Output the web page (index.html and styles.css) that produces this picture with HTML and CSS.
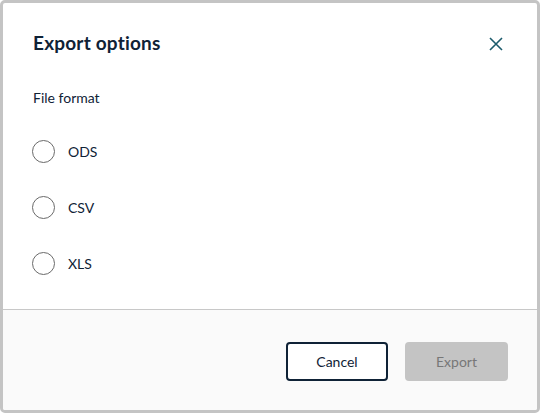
FILE: index.html
```html
<!DOCTYPE html>
<html>
<head>
<meta charset="utf-8">
<link rel="stylesheet" href="styles.css">
</head>
<body>
<div class="modal">
  <div class="header">
    <h1 class="title">Export options</h1>
    <button class="close" aria-label="Close">
      <svg width="14" height="14" viewBox="0 0 14 14"><path d="M1 1 L13 13 M13 1 L1 13" stroke="#1b5b6c" stroke-width="1.6" fill="none"/></svg>
    </button>
  </div>
  <div class="body">
    <div class="label">File format</div>
    <div class="options">
      <label class="option"><span class="radio"></span><span class="opt-text">ODS</span></label>
      <label class="option"><span class="radio"></span><span class="opt-text">CSV</span></label>
      <label class="option"><span class="radio"></span><span class="opt-text">XLS</span></label>
    </div>
  </div>
  <div class="footer">
    <button class="btn btn-cancel">Cancel</button>
    <button class="btn btn-export" disabled>Export</button>
  </div>
</div>
</body>
</html>
```
FILE: styles.css
```css
html, body {
  margin: 0;
  padding: 0;
  background: #ffffff;
}
body {
  font-family: Lato, "Open Sans", sans-serif;
  color: #0f2236;
}
.modal {
  box-sizing: border-box;
  width: 540px;
  height: 413px;
  border: 3px solid #c4c4c4;
  border-radius: 5px;
  overflow: hidden;
  display: flex;
  flex-direction: column;
  background: #ffffff;
}
.header {
  display: flex;
  justify-content: space-between;
  align-items: center;
  padding: 28px 34px 0 30px;
  height: 24px;
}
.title {
  margin: 0;
  font-size: 19px;
  line-height: 24px;
  font-weight: 700;
  letter-spacing: 0.2px;
  color: #0f2236;
}
.close {
  border: 0;
  background: none;
  padding: 0;
  width: 14px;
  height: 14px;
  display: flex;
  margin-top: 1px;
}
.body {
  flex: 1;
  padding: 33px 30px 0 30px;
}
.label {
  font-size: 14px;
  line-height: 20px;
  color: #0f2236;
}
.options {
  display: flex;
  flex-direction: column;
  gap: 33px;
  margin-top: 32px;
}
.option {
  display: flex;
  align-items: center;
  height: 23px;
}
.radio {
  box-sizing: border-box;
  width: 23px;
  height: 23px;
  border: 1px solid #6a6a6a;
  border-radius: 50%;
  margin-left: -1px;
}
.opt-text {
  margin-left: 13px;
  font-size: 14px;
  line-height: 20px;
  color: #0f2236;
}
.footer {
  box-sizing: border-box;
  height: 101px;
  border-top: 1px solid #c8c8c8;
  background: #fafafa;
  display: flex;
  justify-content: flex-end;
  align-items: flex-start;
  gap: 17px;
  padding: 32px 29px 0 0;
}
.btn {
  box-sizing: border-box;
  height: 39px;
  border-radius: 4px;
  font-family: Lato, "Open Sans", sans-serif;
  font-size: 14px;
  padding: 0 0 1px 0;
}
.btn-cancel {
  width: 102px;
  background: #ffffff;
  border: 2px solid #0f2236;
  color: #0f2236;
}
.btn-export {
  width: 103px;
  background: #c4c4c4;
  border: 0;
  color: #777777;
}
```
